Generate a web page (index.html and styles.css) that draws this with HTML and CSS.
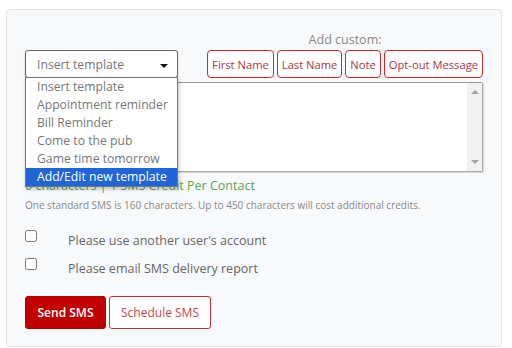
FILE: index.html
```html
<!DOCTYPE html>
<html lang="en">
<head>
  <meta charset="UTF-8">
  <title>Send SMS</title>
  <link rel="stylesheet" href="styles.css">
</head>
<body>
  <div class="card">
    <div class="top-row">
      <div class="template-wrap">
        <div class="template-select">
          <span>Insert template</span>
          <span class="caret"></span>
        </div>
        <!-- open dropdown list -->
        <ul class="template-list">
          <li>Insert template</li>
          <li>Appointment reminder</li>
          <li>Bill Reminder</li>
          <li>Come to the pub</li>
          <li>Game time tomorrow</li>
          <li class="active">Add/Edit new template</li>
        </ul>
      </div>
      <div class="custom">
        <div class="custom-label">Add custom:</div>
        <div class="custom-buttons">
          <button class="tag">First Name</button>
          <button class="tag">Last Name</button>
          <button class="tag">Note</button>
          <button class="tag">Opt-out Message</button>
        </div>
      </div>
    </div>

    <div class="message-box">
      <textarea class="message"></textarea>
      <div class="scrollbar">
        <span class="arrow-up"></span>
        <span class="arrow-down"></span>
      </div>
    </div>

    <div class="counter">0 characters | 1 SMS Credit Per Contact</div>
    <div class="note">One standard SMS is 160 characters. Up to 450 characters will cost additional credits.</div>

    <label class="check-row first">
      <input type="checkbox">
      <span>Please use another user's account</span>
    </label>
    <label class="check-row">
      <input type="checkbox">
      <span>Please email SMS delivery report</span>
    </label>

    <div class="actions">
      <button class="btn-send">Send SMS</button>
      <button class="btn-schedule">Schedule SMS</button>
    </div>
  </div>
</body>
</html>
```

FILE: styles.css
```css
body {
  margin: 0;
  background: #fff;
  font-family: 'Open Sans', sans-serif;
  color: #666;
}
.card {
  margin: 9px 10px 0 6px;
  padding: 0 18px 18px 18px;
  background: #f8f9fa;
  border: 1px solid #e2e3e5;
  border-radius: 4px;
  height: 318px;
}
.top-row {
  display: flex;
  justify-content: space-between;
  align-items: flex-end;
  padding-top: 21px;
}
.template-wrap {
  position: relative;
  width: 153px;
}
.template-select {
  height: 26px;
  border: 1px solid #666;
  border-radius: 3px;
  background: #fff;
  box-shadow: 0 1px 2px rgba(0, 0, 0, 0.2);
  display: flex;
  align-items: center;
  justify-content: space-between;
  padding: 0 9px 0 11px;
  font-size: 12.2px;
  color: #777;
}
.caret {
  width: 0;
  height: 0;
  border-left: 4px solid transparent;
  border-right: 4px solid transparent;
  border-top: 4px solid #111;
  margin-top: 3px;
}
.template-list {
  position: absolute;
  top: 27px;
  left: 0;
  width: 151px;
  margin: 0;
  padding: 0;
  list-style: none;
  background: #fff;
  border: 1px solid #777;
  box-shadow: 1px 2px 4px rgba(0, 0, 0, 0.25);
  z-index: 10;
}
.template-list li {
  height: 18px;
  line-height: 18px;
  padding-left: 11px;
  font-size: 12.2px;
  color: #777;
  white-space: nowrap;
}
.template-list li.active {
  background: #1f65d6;
  color: #fff;
}
.custom {
  display: flex;
  flex-direction: column;
  align-items: center;
}
.custom-label {
  font-size: 12.5px;
  color: #888;
  margin-bottom: 2px;
}
.custom-buttons {
  display: flex;
  gap: 3px;
}
.tag {
  height: 28px;
  padding: 0 4px;
  background: #fff;
  border: 1px solid #cc2a2a;
  border-radius: 4px;
  font-family: 'Open Sans', sans-serif;
  font-size: 11.2px;
  color: #a83445;
}
.message-box {
  display: flex;
  height: 88px;
  margin-top: 4px;
  border: 1px solid #aaa;
  border-top-color: #999;
  border-radius: 2px;
  background: #fff;
  box-shadow: 1px 1px 1px rgba(0, 0, 0, 0.15);
}
.message {
  flex: 1;
  margin: 0;
  border: none;
  outline: none;
  resize: none;
  background: transparent;
}
.scrollbar {
  width: 15px;
  background: #f1f1f1;
  display: flex;
  flex-direction: column;
  justify-content: space-between;
  align-items: center;
  padding: 7px 0;
}
.arrow-up,
.arrow-down {
  width: 0;
  height: 0;
  border-left: 4px solid transparent;
  border-right: 4px solid transparent;
}
.arrow-up {
  border-bottom: 4px solid #a3a3a3;
}
.arrow-down {
  border-top: 4px solid #a3a3a3;
}
.counter {
  margin-top: 5px;
  font-size: 12.5px;
  color: #5aa55a;
}
.note {
  margin-top: 4px;
  font-size: 10px;
  color: #888;
}
.check-row {
  display: flex;
  align-items: flex-start;
  height: 28px;
  font-size: 12.5px;
  color: #666;
}
.check-row.first {
  margin-top: 18px;
}
.check-row input {
  margin: 0;
  width: 12px;
  height: 12px;
}
.check-row span {
  margin-left: 31px;
  margin-top: 2px;
}
.actions {
  display: flex;
  gap: 3px;
  margin-top: 10px;
}
.btn-send,
.btn-schedule {
  height: 33px;
  border-radius: 3px;
  font-family: 'Open Sans', sans-serif;
  font-size: 12px;
}
.btn-send {
  width: 81px;
  background: #c00000;
  border: 1px solid #b00000;
  color: #fff;
  font-weight: 600;
}
.btn-schedule {
  width: 102px;
  background: #fff;
  border: 1px solid #c9302c;
  color: #c4474a;
}
```
